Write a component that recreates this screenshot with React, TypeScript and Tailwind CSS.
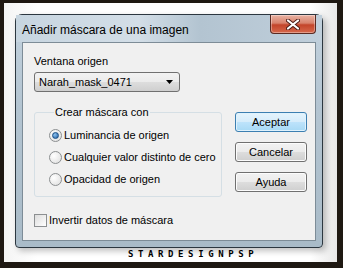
const font = { fontFamily: '"Liberation Sans", Arial, sans-serif' };

const Radio = ({ checked, label }: { checked?: boolean; label: string }) => (
  <div className="flex h-[13px] items-center gap-[2px]">
    <span className="flex h-[13px] w-[13px] shrink-0 items-center justify-center rounded-full border border-[#8c8f91] bg-[radial-gradient(circle_at_35%_35%,#ffffff,#dcdcdc)]">
      {checked && (
        <span className="h-[7px] w-[7px] rounded-full border border-[#1a4f85] bg-[radial-gradient(circle_at_35%_35%,#8fc4f0,#1c5aa0)]" />
      )}
    </span>
    <span className="whitespace-nowrap text-[11px] leading-[13px] text-black">{label}</span>
  </div>
);

const Button = ({ label, primary }: { label: string; primary?: boolean }) => (
  <button
    className={
      primary
        ? 'flex h-[20px] w-[72px] items-center justify-center rounded-[3px] border border-[#3c7fb1] bg-[linear-gradient(#e5f4fc_0%,#d5ecfb_50%,#bde3fb_51%,#a7d9f5_100%)] text-[11px] text-black shadow-[inset_0_0_0_1px_#dff2fd]'
        : 'flex h-[20px] w-[72px] items-center justify-center rounded-[3px] border border-[#707070] bg-[linear-gradient(#f2f2f2_0%,#ebebeb_50%,#dddddd_51%,#cfcfcf_100%)] text-[11px] text-black shadow-[inset_0_0_0_1px_#fcfcfc]'
    }
  >
    {label}
  </button>
);

export default function App() {
  return (
    <div className="flex h-[268px] w-[343px] bg-[#1e1812] pb-[6px] pl-[4px] pr-[6px] pt-[3px]" style={font}>
      <div className="flex flex-1 flex-col bg-[linear-gradient(90deg,#f4f4f4,#ffffff_10%,#ffffff_92%,#e8e8e8)] pl-[11px] pt-[11px]">
        {/* dialog window */}
        <div className="flex h-[234px] w-[308px] flex-col rounded-t-[7px] rounded-b-[4px] border border-[#2c3740] bg-[linear-gradient(#c3d2de,#b3c4d1_40%,#a9bbc8)] shadow-[3px_3px_6px_rgba(0,0,0,0.25)]">
          {/* title bar */}
          <div className="relative flex h-[27px] items-center bg-[linear-gradient(90deg,#c7d5e0,#d3dee7_40%,#b3c4d1_60%,#c0cfdb)] pl-[6px] pt-[2px]">
            <span className="text-[12px] text-black">Añadir máscara de una imagen</span>
            <div className="absolute right-[6px] top-0 flex h-[19px] w-[46px] items-center justify-center rounded-b-[4px] border border-t-0 border-[#5a2a22] bg-[linear-gradient(#e9b3a4_0%,#d8826c_45%,#c3442a_55%,#d7694c_100%)] shadow-[inset_0_0_0_1px_rgba(255,255,255,0.35)]">
              <svg width="14" height="11" viewBox="0 0 14 11">
                <path d="M2 1.5 L12 9.5 M12 1.5 L2 9.5" stroke="#4a1a14" strokeWidth="4" strokeLinecap="round" />
                <path d="M2 1.5 L12 9.5 M12 1.5 L2 9.5" stroke="#ffffff" strokeWidth="2.2" strokeLinecap="round" />
              </svg>
            </div>
          </div>
          {/* client area */}
          <div className="mx-[6px] mb-[6px] flex flex-1 gap-[13px] border border-[#7d8c97] bg-[#f0f0f0] pl-[11px] pt-[12px]">
            <div className="flex w-[188px] shrink-0 flex-col">
              <span className="text-[11px] leading-[13px] text-black">Ventana origen</span>
              <div className="mt-[4px] flex h-[20px] w-[146px] items-center justify-between rounded-[3px] border border-[#707070] bg-[linear-gradient(#f2f2f2_0%,#ebebeb_50%,#dddddd_51%,#cfcfcf_100%)] pl-[4px] pr-[6px]">
                <span className="text-[11px] text-black">Narah_mask_0471</span>
                <svg width="7" height="4" viewBox="0 0 7 4">
                  <path d="M0 0 H7 L3.5 4 Z" fill="#000" />
                </svg>
              </div>
              <fieldset className="mt-[14px] flex w-[188px] min-w-0 flex-col gap-[9px] rounded-[3px] border border-[#d5dfe5] pb-[10px] pl-[14px] pt-[10px]">
                <legend className="ml-[5px] px-[1px] text-[11px] leading-[13px] text-black">Crear máscara con</legend>
                <Radio checked label="Luminancia de origen" />
                <Radio label="Cualquier valor distinto de cero" />
                <Radio label="Opacidad de origen" />
              </fieldset>
              <div className="mt-[17px] flex h-[13px] items-center gap-[2px]">
                <span className="h-[13px] w-[13px] border border-[#8c8f91] bg-[linear-gradient(135deg,#dcdcdc,#ffffff)]" />
                <span className="text-[11px] leading-[13px] text-black">Invertir datos de máscara</span>
              </div>
            </div>
            <div className="mt-[57px] flex flex-col gap-[10px]">
              <Button primary label="Aceptar" />
              <Button label="Cancelar" />
              <Button label="Ayuda" />
            </div>
          </div>
        </div>
        <div
          className="ml-[113px] mt-[2px] text-[9px] font-bold leading-[9px] tracking-[4.6px] text-black"
          style={{ fontFamily: '"DejaVu Sans Mono", monospace' }}
        >
          STARDESIGNPSP
        </div>
      </div>
    </div>
  );
}
